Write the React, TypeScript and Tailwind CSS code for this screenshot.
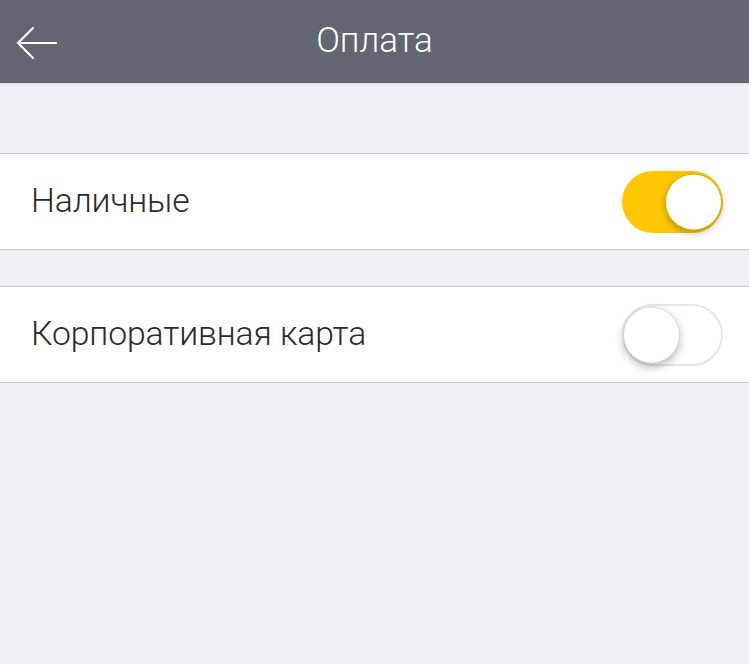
import React from "react";

function Toggle({ on }: { on: boolean }) {
  return (
    <div
      className={
        "relative w-[101px] h-[62px] rounded-full " +
        (on ? "bg-[#fcc600]" : "bg-white border-2 border-[#e6e6e6]")
      }
    >
      <div
        className={
          "absolute top-1/2 -translate-y-1/2 w-[57px] h-[57px] rounded-full bg-white " +
          (on
            ? "right-[1px] shadow-[0_3px_6px_rgba(0,0,0,0.25)] border border-[#d9b000]"
            : "left-[-1px] shadow-[0_4px_8px_rgba(0,0,0,0.25)] border border-[#d8d8d8]")
        }
      />
    </div>
  );
}

function Row({ label, on }: { label: string; on: boolean }) {
  return (
    <div className="flex items-center justify-between h-[97px] bg-white border-y border-[#c8c7cc] pl-[31px] pr-[26px]">
      <span className="text-[33.7px] font-light text-[#2b2b2b] tracking-[-0.1px]">{label}</span>
      <Toggle on={on} />
    </div>
  );
}

export default function App() {
  return (
    <div
      className="w-[749px] h-[664px] bg-[#efeff4] overflow-hidden"
      style={{ fontFamily: '"Roboto", "Liberation Sans", sans-serif' }}
    >
      <header className="relative h-[84px] bg-[#626672] flex items-center justify-center border-b border-[#dcdce4]">
        <svg
          className="absolute left-[16px] top-[26px]"
          width="42"
          height="34"
          viewBox="0 0 42 34"
          fill="none"
          stroke="white"
          strokeWidth="2.2"
          strokeLinecap="round"
        >
          <path d="M2 17h38M17 2L2 17l15 15" />
        </svg>
        <h1 className="text-[35px] font-light text-white">Оплата</h1>
      </header>
      <div className="h-[69px]" />
      <Row label="Наличные" on={true} />
      <div className="h-[36px]" />
      <Row label="Корпоративная карта" on={false} />
    </div>
  );
}
